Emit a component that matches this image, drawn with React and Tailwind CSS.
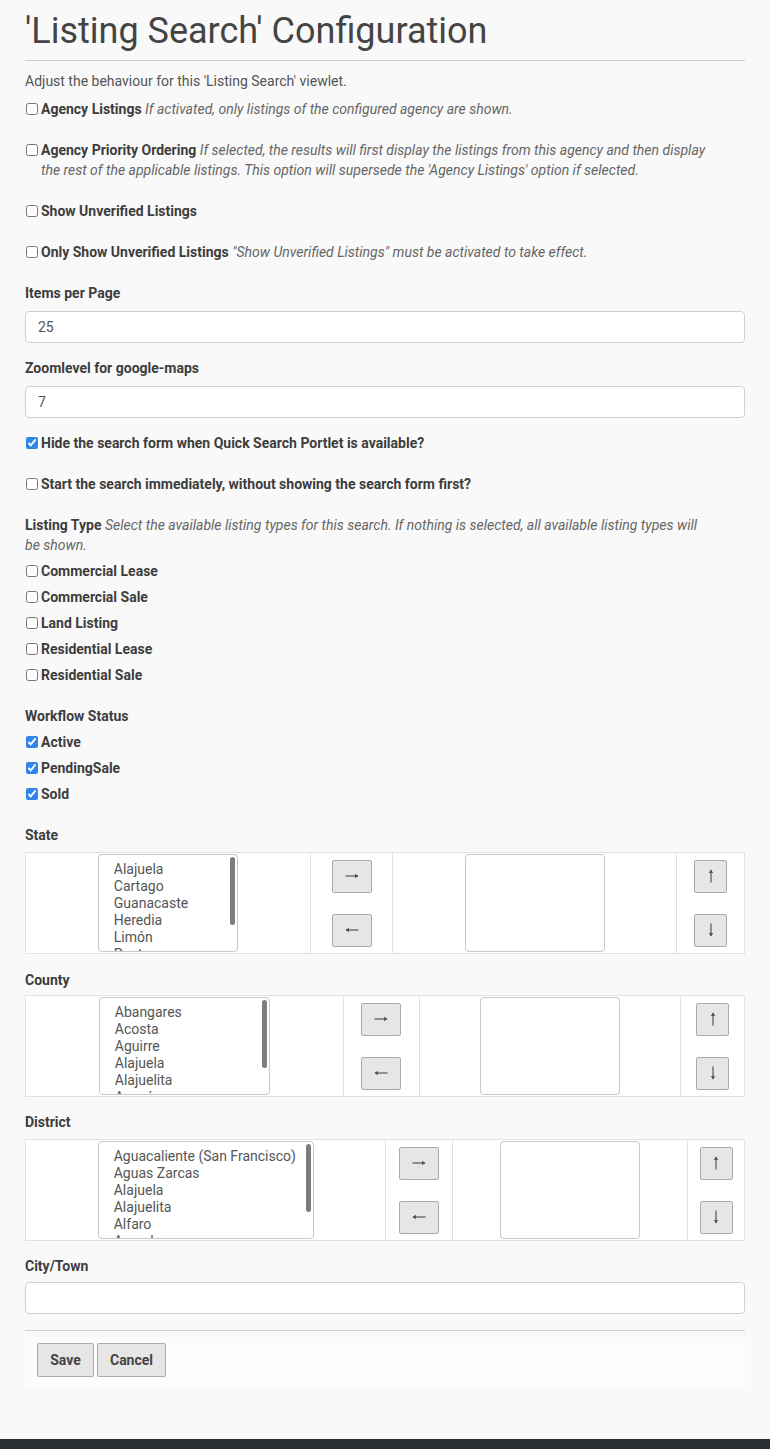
import { useState } from 'react';

const font = { fontFamily: 'Roboto, "Liberation Sans", sans-serif' };

function Check({ label, hint, checked }) {
  return (
    <label className="flex items-start gap-[3px] leading-5">
      <input
        type="checkbox"
        defaultChecked={checked}
        className="mt-[4px] ml-[1px] h-[12px] w-[12px] shrink-0 accent-[#2f86e8]"
      />
      <span>
        <b className="font-bold text-[#3d3d3d]">{label}</b>
        {hint && <i className="text-[#666]"> {hint}</i>}
      </span>
    </label>
  );
}

function Listbox({ items, width }) {
  return (
    <div
      className="relative mx-auto h-[98px] overflow-hidden rounded-[4px] border border-[#c8c8c8] bg-white"
      style={{ width }}
    >
      <div className="pl-[15px] pt-[6px] text-[14px] leading-[17px] text-[#555]">
        {items.map((it) => (
          <div key={it} className="whitespace-nowrap">{it}</div>
        ))}
      </div>
      {items.length > 0 && (
        <div className="absolute right-[2px] top-[2px] h-[68px] w-[5px] rounded-full bg-[#7d7d7d]" />
      )}
    </div>
  );
}

// thin arrow glyph, rotated per direction
function Arrow({ dir }) {
  const rot = { right: 0, left: 180, up: -90, down: 90 }[dir];
  return (
    <svg width="16" height="16" viewBox="0 0 16 16" style={{ transform: `rotate(${rot}deg)` }}>
      <path d="M1.5 8 H14" stroke="#555" strokeWidth="1.2" fill="none" />
      <path d="M11 5.8 L14.5 8 L11 10.2 Z" fill="#555" />
    </svg>
  );
}

function ArrowBtn({ dir, w }) {
  return (
    <button
      className="flex h-[33px] items-center justify-center rounded-[2px] border border-[#aaa] bg-[#e6e6e6]"
      style={{ width: w }}
    >
      <Arrow dir={dir} />
    </button>
  );
}

function DualList({ items, cols, leftW }) {
  return (
    <table className="w-full border-collapse border border-[#e2e2e2] bg-white">
      <colgroup>
        {cols.map((c, i) => (
          <col key={i} style={{ width: c }} />
        ))}
      </colgroup>
      <tbody>
        <tr className="h-[101px]">
          <td className="border border-[#e2e2e2] align-middle">
            <Listbox items={items} width={leftW} />
          </td>
          <td className="border border-[#e2e2e2] align-middle">
            <div className="flex flex-col items-center gap-[21px]">
              <ArrowBtn dir="right" w={40} />
              <ArrowBtn dir="left" w={40} />
            </div>
          </td>
          <td className="border border-[#e2e2e2] align-middle">
            <Listbox items={[]} width={140} />
          </td>
          <td className="border border-[#e2e2e2] align-middle">
            <div className="flex flex-col items-center gap-[21px]">
              <ArrowBtn dir="up" w={33} />
              <ArrowBtn dir="down" w={33} />
            </div>
          </td>
        </tr>
      </tbody>
    </table>
  );
}

function Field({ label, value, gap = 8 }) {
  const [v, setV] = useState(value);
  return (
    <div>
      <div className="font-bold leading-5 text-[#3d3d3d]" style={{ marginBottom: gap }}>{label}</div>
      <input
        value={v}
        onChange={(e) => setV(e.target.value)}
        className="h-[32px] w-full rounded-[4px] border border-[#cfcfcf] bg-white px-[12px] text-[14px] text-[#555] outline-none"
      />
    </div>
  );
}

export default function App() {
  return (
    <div className="min-h-[1449px] bg-[#f9f9f9] text-[14px] text-[#555]" style={font}>
      <div className="mx-[25px] pb-[50px]">
        <h1 className="pt-[10px] pb-[8px] text-[36px] font-normal leading-[42px] text-[#444]">
          'Listing Search' Configuration
        </h1>
        <hr className="border-t border-[#cfcfcf]" />
        <p className="mt-[10px] mb-[8px] leading-5">Adjust the behaviour for this 'Listing Search' viewlet.</p>

        <div className="flex flex-col gap-[21px]">
          <Check label="Agency Listings" hint="If activated, only listings of the configured agency are shown." />
          <div className="pr-[30px]">
            <Check
              label="Agency Priority Ordering"
              hint="If selected, the results will first display the listings from this agency and then display the rest of the applicable listings. This option will supersede the 'Agency Listings' option if selected."
            />
          </div>
          <Check label="Show Unverified Listings" />
          <Check label="Only Show Unverified Listings" hint={'"Show Unverified Listings" must be activated to take effect.'} />
          <Field label="Items per Page" value="25" />
        </div>
        <div className="mt-[15px]">
          <Field label="Zoomlevel for google-maps" value="7" />
        </div>
        <div className="mt-[15px] flex flex-col gap-[21px]">
          <Check label="Hide the search form when Quick Search Portlet is available?" checked />
          <Check label="Start the search immediately, without showing the search form first?" />
          <div>
            <div className="pr-[30px] leading-5">
              <b className="font-bold text-[#3d3d3d]">Listing Type</b>{' '}
              <i className="text-[#666]">
                Select the available listing types for this search. If nothing is selected, all available listing types will be shown.
              </i>
            </div>
            <div className="mt-[6px] flex flex-col gap-[6px]">
              {['Commercial Lease', 'Commercial Sale', 'Land Listing', 'Residential Lease', 'Residential Sale'].map((t) => (
                <Check key={t} label={t} />
              ))}
            </div>
          </div>
          <div>
            <div className="font-bold leading-5 text-[#3d3d3d]">Workflow Status</div>
            <div className="mt-[6px] flex flex-col gap-[6px]">
              {['Active', 'PendingSale', 'Sold'].map((t) => (
                <Check key={t} label={t} checked />
              ))}
            </div>
          </div>
          <div>
            <div className="mb-[7px] font-bold leading-5 text-[#3d3d3d]">State</div>
            <DualList
              items={['Alajuela', 'Cartago', 'Guanacaste', 'Heredia', 'Limón', 'Puntarenas']}
              cols={[285, 83, 284, 68]}
              leftW={140}
            />
          </div>
        </div>
        <div className="mt-[16px]">
          <div className="mb-[5px] font-bold leading-5 text-[#3d3d3d]">County</div>
          <DualList
            items={['Abangares', 'Acosta', 'Aguirre', 'Alajuela', 'Alajuelita', 'Aserrí']}
            cols={[318, 77, 261, 64]}
            leftW={171}
          />
        </div>
        <div className="mt-[15px]">
          <div className="mb-[7px] font-bold leading-5 text-[#3d3d3d]">District</div>
          <DualList
            items={['Aguacaliente (San Francisco)', 'Aguas Zarcas', 'Alajuela', 'Alajuelita', 'Alfaro', 'Arenal']}
            cols={[361, 67, 235, 57]}
            leftW={216}
          />
        </div>
        <div className="mt-[15px]">
          <Field label="City/Town" value="" gap={6} />
        </div>
        <hr className="mt-[16px] border-t border-[#cfcfcf]" />
        <div className="mt-[6px] flex gap-[3px] bg-[#fcfcfc] px-[12px] pt-[6px] pb-[12px]">
          <button className="h-[34px] w-[57px] rounded-[2px] border border-[#aaa] bg-[#e6e6e6] font-bold text-[#444]">Save</button>
          <button className="h-[34px] w-[69px] rounded-[2px] border border-[#aaa] bg-[#e6e6e6] font-bold text-[#444]">Cancel</button>
        </div>
      </div>
      <div className="h-[10px] bg-[#2b2e31]" />
    </div>
  );
}
